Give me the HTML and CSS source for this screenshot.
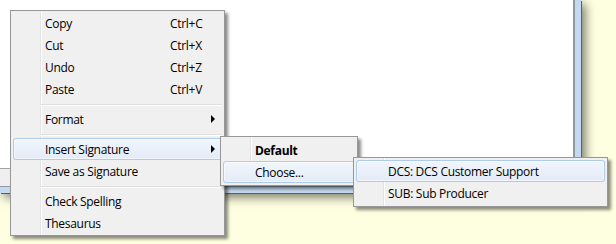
FILE: index.html
```html
<!DOCTYPE html>
<html lang="en">
<head>
    <meta charset="UTF-8">
    <title>Context menu</title>
    <link rel="stylesheet" href="styles.css">
</head>
<body>
    <div class="window">
        <div class="pane"></div>
        <div class="status"></div>
    </div>

    <!-- main context menu -->
    <div class="menu menu-main">
        <div class="item"><span class="label">Copy</span><span class="key">Ctrl+C</span></div>
        <div class="item"><span class="label">Cut</span><span class="key">Ctrl+X</span></div>
        <div class="item"><span class="label">Undo</span><span class="key">Ctrl+Z</span></div>
        <div class="item"><span class="label">Paste</span><span class="key">Ctrl+V</span></div>
        <div class="sep"></div>
        <div class="item"><span class="label">Format</span><span class="arrow"></span></div>
        <div class="sep"></div>
        <div class="item hot"><span class="label">Insert Signature</span><span class="arrow"></span></div>
        <div class="item"><span class="label">Save as Signature</span></div>
        <div class="sep"></div>
        <div class="item"><span class="label">Check Spelling</span></div>
        <div class="item"><span class="label">Thesaurus</span></div>
    </div>

    <!-- signature submenu -->
    <div class="menu menu-sig">
        <div class="item bold"><span class="label">Default</span></div>
        <div class="item hot"><span class="label">Choose...</span><span class="arrow"></span></div>
    </div>

    <!-- choose submenu -->
    <div class="menu menu-choose">
        <div class="item hot"><span class="label">DCS: DCS Customer Support</span></div>
        <div class="item"><span class="label">SUB: Sub Producer</span></div>
    </div>
</body>
</html>
```
FILE: styles.css
```css
body {
    margin: 0;
    width: 616px;
    height: 244px;
    overflow: hidden;
    position: relative;
    background-color: #fefee1;
    font-family: "Open Sans", "Noto Sans", sans-serif;
    font-size: 12px;
    letter-spacing: -0.3px;
    color: #000;
}

/* window behind the menu */
.window {
    width: 575px;
    height: 187px;
    display: flex;
    flex-direction: column;
    border: solid #c3d9f0;
    border-width: 0 6px 6px 0;
    box-shadow: 1px 1px 0 #56616c, 4px 4px 10px rgba(0, 0, 0, 0.55);
}

.pane {
    flex: 1;
    background-color: #fff;
    border-right: 2px solid #8e99a4;
    border-bottom: 1px solid #a3a3a3;
}

.status {
    height: 17px;
    background-color: #f0eeee;
    border-right: 2px solid #8e99a4;
    border-bottom: 1px solid #8e99a4;
}

/* menus */
.menu {
    position: absolute;
    padding: 1px 2px;
    border: 1px solid #979797;
    background: linear-gradient(to right, transparent 29px, #e2e3e3 29px, #e2e3e3 30px, #fff 30px, #fff 31px, transparent 31px), #f0f0f0;
    box-shadow: 3px 3px 3px rgba(0, 0, 0, 0.45);
}

.menu-main {
    left: 10px;
    top: 10px;
    width: 209px;
}

.menu-sig {
    left: 220px;
    top: 136px;
    width: 132px;
    padding: 2px 2px;
}

.menu-choose {
    left: 353px;
    top: 157px;
    width: 249px;
    padding: 2px 2px;
}

.item {
    height: 22px;
    display: flex;
    align-items: center;
    padding-left: 32px;
    white-space: nowrap;
    border-radius: 3px;
}

.item.hot {
    background: linear-gradient(#f2f6fc, #e2ebf7);
    box-shadow: inset 0 0 0 1px #aecbee, inset 0 0 0 2px rgba(255, 255, 255, 0.5);
}

.item.bold {
    font-weight: bold;
}

.label {
    flex: 0 0 125px;
}

.key {
    flex: none;
}

.arrow {
    margin-left: auto;
    margin-right: 7px;
    width: 0;
    height: 0;
    border-left: 4px solid #000;
    border-top: 4px solid transparent;
    border-bottom: 4px solid transparent;
}

.sep {
    height: 8px;
    margin-left: 27px;
    background: linear-gradient(transparent 4px, #e0e0e0 4px, #e0e0e0 5px, #fff 5px, #fff 6px, transparent 6px);
}
```
